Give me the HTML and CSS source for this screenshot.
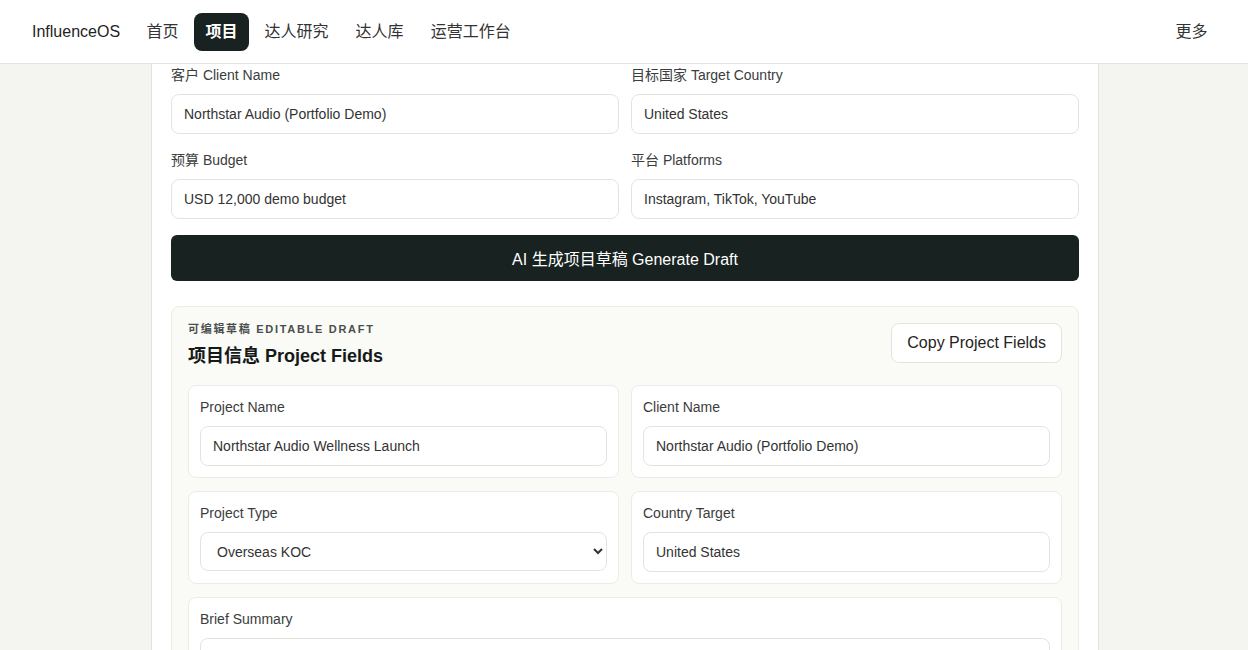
FILE: index.html
```html
<!DOCTYPE html>
<html lang="zh-CN">
<head>
  <meta charset="UTF-8" />
  <meta name="viewport" content="width=device-width, initial-scale=1.0"/>
  <title>InfluenceOS - 项目</title>
  <link rel="stylesheet" href="styles.css">
</head>
<body>
  <!-- Top nav -->
  <header class="topbar">
    <div class="brand">InfluenceOS</div>
    <nav class="nav">
      <a class="nav-item" href="#">首页</a>
      <a class="nav-item active" href="#">项目</a>
      <a class="nav-item" href="#">达人研究</a>
      <a class="nav-item" href="#">达人库</a>
      <a class="nav-item" href="#">运营工作台</a>
    </nav>
    <a class="nav-item more" href="#">更多</a>
  </header>

  <main class="page">
    <section class="card">
      <!-- Brief inputs -->
      <div class="form-grid">
        <div class="field">
          <label>客户 Client Name</label>
          <input type="text" value="Northstar Audio (Portfolio Demo)">
        </div>
        <div class="field">
          <label>目标国家 Target Country</label>
          <input type="text" value="United States">
        </div>
        <div class="field">
          <label>预算 Budget</label>
          <input type="text" value="USD 12,000 demo budget">
        </div>
        <div class="field">
          <label>平台 Platforms</label>
          <input type="text" value="Instagram, TikTok, YouTube">
        </div>
      </div>

      <button class="primary-btn">AI 生成项目草稿 Generate Draft</button>

      <!-- Draft -->
      <div class="draft">
        <div class="draft-head">
          <div>
            <div class="eyebrow">可编辑草稿 EDITABLE DRAFT</div>
            <h2 class="draft-title">项目信息 Project Fields</h2>
          </div>
          <button class="ghost-btn">Copy Project Fields</button>
        </div>

        <div class="draft-grid">
          <div class="draft-field">
            <label>Project Name</label>
            <input type="text" value="Northstar Audio Wellness Launch">
          </div>
          <div class="draft-field">
            <label>Client Name</label>
            <input type="text" value="Northstar Audio (Portfolio Demo)">
          </div>
          <div class="draft-field">
            <label>Project Type</label>
            <select>
              <option selected>Overseas KOC</option>
              <option>Domestic KOL</option>
              <option>UGC Seeding</option>
            </select>
          </div>
          <div class="draft-field">
            <label>Country Target</label>
            <input type="text" value="United States">
          </div>
          <div class="draft-field wide">
            <label>Brief Summary</label>
            <textarea rows="4">Launch the Northstar Audio wellness headphone line with US lifestyle, fitness and sleep creators across Instagram, TikTok and YouTube, focused on everyday calm.</textarea>
          </div>
        </div>
      </div>
    </section>
  </main>
</body>
</html>
```

FILE: styles.css
```css
body {
  margin: 0;
  font-family: 'Liberation Sans', Arial, 'Noto Sans CJK SC', sans-serif;
  background: #f4f4f0;
  color: #2b2f2e;
}
.topbar {
  height: 63px;
  background: #fff;
  border-bottom: 1px solid #e4e4df;
  display: flex;
  align-items: center;
  padding: 0 29px 0 32px;
}
.brand {
  font-size: 16px;
  color: #1f2423;
  margin-right: 15px;
}
.nav {
  display: flex;
  gap: 4px;
  flex: 1;
}
.nav-item {
  font-size: 16px;
  line-height: 22px;
  padding: 8px 11.5px;
  border-radius: 8px;
  color: #333;
  text-decoration: none;
}
.nav-item.active {
  background: #182220;
  color: #fff;
  font-weight: bold;
}
.page {
  max-width: 950px;
  box-sizing: border-box;
  padding-left: 2px;
  margin: 0 auto;
}
.card {
  background: #fff;
  border-left: 1px solid #e4e4df;
  border-right: 1px solid #e4e4df;
  padding: 2px 19px 0;
  min-height: 600px;
}
label {
  display: block;
  font-size: 14px;
  line-height: 18px;
  color: #3a3d3c;
}
input, select, textarea {
  display: block;
  width: 100%;
  box-sizing: border-box;
  font-family: inherit;
  font-size: 14px;
  color: #333;
  background: #fff;
  border: 1px solid #e4e4df;
  border-radius: 8px;
  padding: 0 12px;
  outline: none;
}
input {
  height: 40px;
}
.form-grid {
  display: grid;
  grid-template-columns: 1fr 1fr;
  column-gap: 12px;
  row-gap: 17px;
}
.field label {
  margin-bottom: 10px;
}
.primary-btn {
  display: block;
  width: 100%;
  height: 46px;
  margin-top: 16px;
  background: #182220;
  color: #fff;
  border: none;
  border-radius: 6px;
  font-family: inherit;
  font-size: 16px;
}
.draft {
  margin-top: 25px;
  background: #fafaf7;
  border: 1px solid #ecece7;
  border-radius: 8px;
  padding: 15px 16px 0;
}
.draft-head {
  display: flex;
  justify-content: space-between;
  align-items: flex-start;
  margin-bottom: 17px;
}
.eyebrow {
  font-size: 11px;
  line-height: 14px;
  font-weight: bold;
  letter-spacing: 1.7px;
  color: #4a4f4d;
}
.draft-title {
  margin: 8px 0 0;
  font-size: 18px;
  line-height: 24px;
  color: #151918;
}
.ghost-btn {
  margin-top: 1px;
  height: 40px;
  padding: 0 15px;
  background: #fff;
  border: 1px solid #e4e4df;
  border-radius: 8px;
  font-family: inherit;
  font-size: 16px;
  color: #1f2423;
}
.draft-grid {
  display: grid;
  grid-template-columns: 1fr 1fr;
  gap: 13px 12px;
}
.draft-field {
  background: #fff;
  border: 1px solid #ecece7;
  border-radius: 8px;
  padding: 12px 11px 11px;
}
.draft-field.wide {
  grid-column: 1 / -1;
}
.draft-field label {
  margin-bottom: 10px;
}
select {
  height: 39px;
}
textarea {
  padding: 7px 12px;
  color: #555;
  line-height: 20px;
  resize: vertical;
}
```
